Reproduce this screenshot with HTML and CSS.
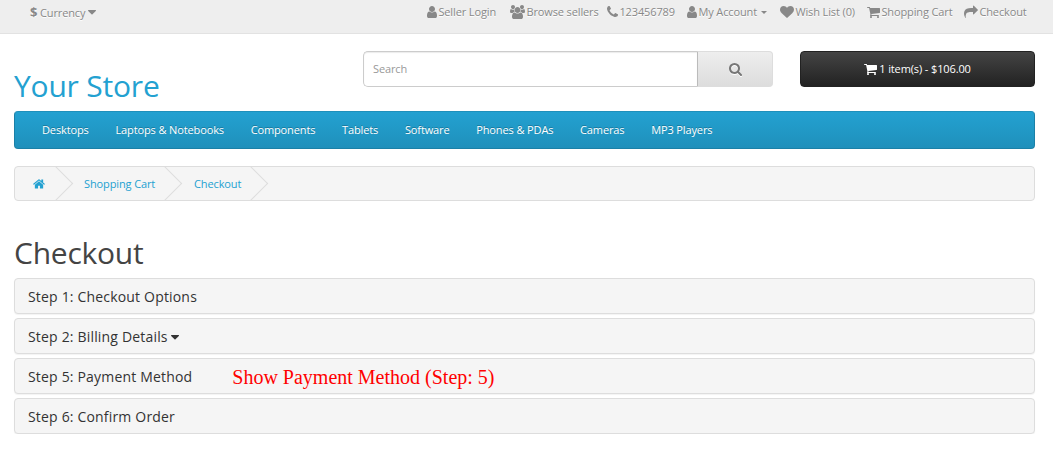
FILE: index.html
```html
<!DOCTYPE html>
<html lang="en">
<head>
    <meta charset="UTF-8">
    <meta name="viewport" content="width=device-width, initial-scale=1.0">
    <title>Checkout</title>
    <link rel="stylesheet" href="styles.css">
</head>
<body>
    <svg class="sprite" aria-hidden="true">
        <symbol id="user" viewBox="256 0 1280 1792"><path d="M1536 1399q0 109-62.5 187t-150.5 78h-854q-88 0-150.5-78t-62.5-187q0-85 8.5-160.5t31.5-152 58.5-131 94-89 134.5-34.5q131 128 313 128t313-128q76 0 134.5 34.5t94 89 58.5 131 31.5 152 8.5 160.5zm-256-887q0 159-112.5 271.5t-271.5 112.5-271.5-112.5-112.5-271.5 112.5-271.5 271.5-112.5 271.5 112.5 112.5 271.5z"/></symbol>
        <symbol id="users" viewBox="0 0 1920 1792"><path d="M593 896q-162 5-265 128h-134q-82 0-138-40.500t-56-118.500q0-353 124-353 6 0 43.500 21t97.500 42.500 119 21.500q67 0 133-23-5 37-5 66 0 139 81 256zm1071 637q0 120-73 189.500t-194 69.500h-874q-121 0-194-69.500t-73-189.500q0-53 3.500-103.500t14-109 26.500-108.500 43-97.500 62-81 85.500-53.500 111.500-20q10 0 43 21.500t73 48 107 48 135 21.500 135-21.500 107-48 73-48 43-21.500q61 0 111.500 20t85.500 53.500 62 81 43 97.500 26.500 108.500 14 109 3.500 103.500zm-1024-1277q0 106-75 181t-181 75-181-75-75-181 75-181 181-75 181 75 75 181zm704 384q0 159-112.500 271.500t-271.500 112.500-271.500-112.500-112.500-271.500 112.500-271.500 271.500-112.500 271.500 112.500 112.500 271.500zm576 225q0 78-56 118.500t-138 40.500h-134q-103-123-265-128 81-117 81-256 0-29-5-66 66 23 133 23 59 0 119-21.500t97.500-42.500 43.500-21q124 0 124 353zm-128-609q0 106-75 181t-181 75-181-75-75-181 75-181 181-75 181 75 75 181z"/></symbol>
        <symbol id="phone" viewBox="192 0 1408 1792"><path d="M1600 1240q0 27-10 70.500t-21 68.500q-21 50-122 106-94 51-186 51-27 0-52.500-3.500t-57.500-12.500-47.500-14.500-55.500-20.500-49-18q-98-35-175-83-128-79-264.500-215.500t-215.500-264.500q-48-77-83-175-3-9-18-49t-20.500-55.500-14.500-47.500-12.500-57.500-3.500-52.500q0-92 51-186 56-101 106-122 25-11 68.500-21t70.500-10q14 0 21 3 18 6 53 76 11 19 30 54t35 63.500 31 53.500q3 4 17.500 25t21.500 35.500 7 28.500q0 20-28.500 50t-62 55-62 53-28.500 46q0 9 5 22.500t8.500 20.500 14 24 11.500 19q76 137 174 235t235 174q2 1 19 11.500t24 14 20.500 8.500 22.500 5q18 0 46-28.500t53-62 55-62 50-28.500q14 0 28.500 7t35.500 21.500 25 17.500q25 15 53.500 31t63.500 35 54 30q70 35 76 53 3 7 3 21z"/></symbol>
        <symbol id="heart" viewBox="0 0 1792 1792"><path d="M896 1664q-26 0-44-18l-624-602q-10-8-27.500-26t-55.500-65.500-68-97.500-53.500-121-23.500-138q0-220 127-344t351-124q62 0 126.500 21.500t120 58 95.500 68.500 76 68q36-36 76-68t95.500-68.500 120-58 126.500-21.500q224 0 351 124t127 344q0 221-229 450l-623 600q-18 18-44 18z"/></symbol>
        <symbol id="cart" viewBox="64 0 1664 1792"><path d="M704 1536q0 52-38 90t-90 38-90-38-38-90 38-90 90-38 90 38 38 90zm896 0q0 52-38 90t-90 38-90-38-38-90 38-90 90-38 90 38 38 90zm128-1088v512q0 24-16.500 42.500t-40.500 21.500l-1044 122q13 60 13 70 0 16-24 64h920q26 0 45 19t19 45-19 45-45 19h-1024q-26 0-45-19t-19-45q0-11 8-31.500t16-36 21.500-40 15.500-29.500l-177-823h-204q-26 0-45-19t-19-45 19-45 45-19h256q16 0 28.500 6.500t19.500 15.500 13 24.500 8 26 5.500 29.500 4.500 26h1201q26 0 45 19t19 45z"/></symbol>
        <symbol id="share" viewBox="0 0 1792 1792"><path d="M1792 640q0 26-19 45l-512 512q-19 19-45 19t-45-19-19-45v-256h-224q-98 0-175.500 6t-154 21.500-133 42.500-105.500 69.500-80 101-48.500 138.500-17.500 181q0 55 5 123 0 6 2.500 23.500t2.500 26.500q0 15-8.500 25t-23.500 10q-16 0-28-17-7-9-13-22t-13.500-30-10.500-24q-127-285-127-451 0-199 53-333 162-403 875-403h224v-256q0-26 19-45t45-19 45 19l512 512q19 19 19 45z"/></symbol>
        <symbol id="search" viewBox="64 0 1664 1792"><path d="M1216 832q0-185-131.500-316.500t-316.500-131.500-316.500 131.500-131.500 316.500 131.500 316.500 316.500 131.500 316.500-131.500 131.500-316.500zm512 832q0 52-38 90t-90 38q-54 0-90-38l-343-342q-179 124-399 124-143 0-273.500-55.500t-225-150-150-225-55.500-273.500 55.500-273.500 150-225 225-150 273.500-55.500 273.500 55.500 225 150 150 225 55.500 273.500q0 220-124 399l343 343q37 37 37 90z"/></symbol>
        <symbol id="home" viewBox="64 0 1664 1792"><path d="M1472 992v480q0 26-19 45t-45 19h-384v-384h-256v384h-384q-26 0-45-19t-19-45v-480q0-1 .5-3t.5-3l575-474 575 474q1 2 1 6zm223-69l-62 74q-8 9-21 11h-3q-13 0-21-7l-692-577-692 577q-12 8-24 7-13-2-21-11l-62-74q-8-10-7-23.500t11-21.500l719-599q32-26 76-26t76 26l244 204v-195q0-14 9-23t23-9h192q14 0 23 9t9 23v408l219 182q10 8 11 21.500t-7 23.500z"/></symbol>
        <symbol id="caret" viewBox="0 0 8 5"><path d="M.5 0h7q.9.300.300 1L4.500 4.300q-.5.500-1 0L.200 1Q-.300.300.500 0z"/></symbol>
    </svg>

    <nav id="top">
        <a class="currency" href="#"><b>$</b> <span>Currency</span> <svg class="caret"><use href="#caret"/></svg></a>
        <div class="top-links">
            <a class="seller" href="#"><svg class="icon w10"><use href="#user"/></svg><span>Seller Login</span></a>
            <a class="browse" href="#"><svg class="icon w15"><use href="#users"/></svg><span>Browse sellers</span></a>
            <a class="phone" href="#"><svg class="icon w11"><use href="#phone"/></svg><span>123456789</span></a>
            <a class="account" href="#"><svg class="icon w10"><use href="#user"/></svg><span>My Account</span><i class="mini-caret"></i></a>
            <a class="wishlist" href="#"><svg class="icon w14"><use href="#heart"/></svg><span>Wish List (0)</span></a>
            <a class="basket" href="#"><svg class="icon w13"><use href="#cart"/></svg><span>Shopping Cart</span></a>
            <a class="checkout" href="#"><svg class="icon w14"><use href="#share"/></svg><span>Checkout</span></a>
        </div>
    </nav>

    <div class="container">
        <header>
            <h1 class="logo"><a href="#">Your Store</a></h1>
            <form class="search">
                <input type="text" placeholder="Search">
                <button type="button"><svg class="icon w13"><use href="#search"/></svg></button>
            </form>
            <button class="cart-button" type="button"><svg class="icon w13"><use href="#cart"/></svg><span>1 item(s) - $106.00</span></button>
        </header>

        <nav class="menu">
            <a href="#">Desktops</a>
            <a href="#">Laptops &amp; Notebooks</a>
            <a href="#">Components</a>
            <a href="#">Tablets</a>
            <a href="#">Software</a>
            <a href="#">Phones &amp; PDAs</a>
            <a href="#">Cameras</a>
            <a href="#">MP3 Players</a>
        </nav>

        <ul class="breadcrumb">
            <li class="crumb-home"><a href="#"><svg class="icon w12"><use href="#home"/></svg></a></li>
            <li class="crumb-cart"><a href="#">Shopping Cart</a></li>
            <li class="crumb-checkout"><a href="#">Checkout</a></li>
        </ul>

        <h1 class="title">Checkout</h1>
        <div class="steps">
            <div class="panel">Step 1: Checkout Options</div>
            <div class="panel">Step 2: Billing Details <svg class="caret"><use href="#caret"/></svg></div>
            <div class="panel">Step 5: Payment Method <span class="note">Show Payment Method (Step: 5)</span></div>
            <div class="panel">Step 6: Confirm Order</div>
        </div>
    </div>
</body>
</html>
```
FILE: styles.css
```css
* {
    box-sizing: border-box;
}

body {
    margin: 0;
    font-family: "Open Sans", sans-serif;
    font-size: 11px;
    line-height: 20px;
    letter-spacing: -0.12px;
    color: #666;
    background-color: #fff;
}

a {
    color: #23a1d1;
    text-decoration: none;
}

.sprite {
    position: absolute;
    width: 0;
    height: 0;
}

.icon {
    flex: none;
    height: 14px;
    fill: currentColor;
}

.w10 { width: 10px; }
.w11 { width: 11px; }
.w12 { width: 12px; }
.w13 { width: 13px; }
.w14 { width: 14px; }
.w15 { width: 15px; }

.caret {
    width: 8px;
    height: 5px;
    fill: currentColor;
}

#top {
    display: flex;
    justify-content: space-between;
    height: 34px;
    padding: 2px 0 0 30px;
    background-color: #eee;
    border-bottom: 1px solid #e2e2e2;
}

#top a {
    display: flex;
    align-items: center;
    height: 20px;
    color: #888;
    text-shadow: 0 1px 0 #fff;
    white-space: nowrap;
}

#top .currency {
    gap: 2px;
}

.currency b {
    width: 8px;
    font-size: 13px;
}

.currency span {
    position: relative;
    top: 1px;
}

#top .caret {
    margin-left: 1px;
}

.top-links {
    display: flex;
}

#top .top-links a {
    gap: 1.4px;
}

#top .seller { width: 83px; }
#top .browse { width: 97px; }
#top .phone { width: 80px; gap: 2px; }
#top .account { width: 93px; }
#top .wishlist { width: 87px; }
#top .basket { width: 97px; }
#top .checkout { width: 89px; }

.mini-caret {
    margin-left: 3px;
    border-top: 3px solid #888;
    border-left: 3px solid transparent;
    border-right: 3px solid transparent;
}

.container {
    padding: 0 18px 0 14px;
}

header {
    display: flex;
    height: 77px;
    padding-top: 17px;
}

.logo {
    width: 349px;
    margin: 16px 0 0;
    font-size: 30px;
    font-weight: 400;
    line-height: 38px;
    letter-spacing: -0.2px;
}

.search {
    display: flex;
    width: 410px;
    height: 36px;
    margin-right: 27px;
}

.search input {
    flex: 1;
    min-width: 0;
    padding: 0 9px;
    font: inherit;
    letter-spacing: inherit;
    border: 1px solid #ccc;
    border-right: 0;
    border-radius: 5px 0 0 5px;
    box-shadow: inset 0 1px 1px rgba(0, 0, 0, 0.08);
}

.search input::placeholder {
    color: #999;
}

.search button {
    display: flex;
    align-items: center;
    justify-content: center;
    width: 76px;
    color: #777;
    background-image: linear-gradient(#eee, #ddd);
    border: 1px solid #ddd;
    border-left-color: #bbb;
    border-radius: 0 4px 4px 0;
}

.search .icon {
    width: 13px;
    height: 14px;
    filter: drop-shadow(0 1px 0 #fff);
}

.cart-button {
    display: flex;
    flex: 1;
    align-items: center;
    justify-content: center;
    gap: 2px;
    height: 36px;
    color: #fff;
    font: inherit;
    letter-spacing: inherit;
    background-image: linear-gradient(#444, #222);
    border: 1px solid #222;
    border-radius: 4px;
}

.menu {
    display: flex;
    align-items: center;
    gap: 26.7px;
    height: 38px;
    padding: 0 27px;
    background-image: linear-gradient(#23a1d1, #1f90bb);
    border: 1px solid #1b80a7;
    border-top-color: #1f90bb;
    border-radius: 4px;
}

.menu a {
    color: #fff;
    text-shadow: 0 -1px 0 rgba(0, 0, 0, 0.25);
    white-space: nowrap;
}

.breadcrumb {
    display: flex;
    height: 35px;
    margin: 17px 0 0;
    padding: 0;
    list-style: none;
    overflow: hidden;
    background-color: #f5f5f5;
    border: 1px solid #ddd;
    border-radius: 4px;
}

.breadcrumb li {
    position: relative;
    display: flex;
    align-items: center;
    white-space: nowrap;
}

.breadcrumb a {
    display: flex;
}

.crumb-home { width: 53px; padding-left: 18px; }
.crumb-cart { width: 109px; padding-left: 16px; }
.crumb-checkout { width: 86px; padding-left: 17px; }

/* arrow between crumbs */
.breadcrumb li::after {
    content: "";
    position: absolute;
    top: 4px;
    right: 0;
    width: 24px;
    height: 24px;
    border-top: 1px solid #ddd;
    border-right: 1px solid #ddd;
    transform: rotate(45deg);
}

.title {
    margin: 32px 0 5px;
    color: #444;
    font-size: 30px;
    font-weight: 400;
    line-height: 40px;
    letter-spacing: -0.25px;
}

.steps {
    display: flex;
    flex-direction: column;
    gap: 4px;
}

.panel {
    display: flex;
    align-items: center;
    height: 36px;
    padding: 2px 13px 0;
    color: #333;
    font-size: 14px;
    letter-spacing: 0.18px;
    background-color: #f5f5f5;
    border: 1px solid #ddd;
    border-radius: 4px;
    box-shadow: 0 1px 1px rgba(0, 0, 0, 0.05);
}

.panel .caret {
    margin-left: 3px;
}

.note {
    margin-left: 40px;
    color: #f00;
    font-family: "Liberation Serif", serif;
    font-size: 20px;
    letter-spacing: 0;
}
```
